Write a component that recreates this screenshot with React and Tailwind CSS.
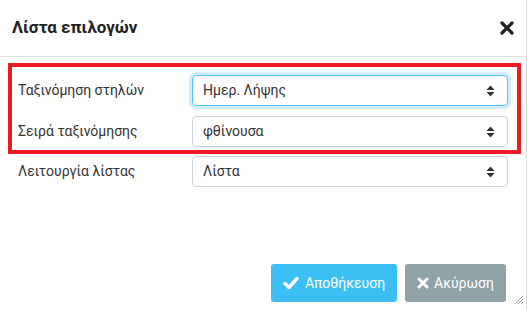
import React from "react";

const Caret = () => (
  <svg width="9" height="12" viewBox="0 0 9 12" className="shrink-0">
    <path d="M4.5 0.5 L8.5 5 H0.5 Z" fill="#333" />
    <path d="M0.5 7 H8.5 L4.5 11.5 Z" fill="#333" />
  </svg>
);

const Select = ({ value, focused }) => (
  <div
    className={
      "w-[316px] h-[31px] flex items-center justify-between pl-[10px] pr-[12px] rounded-[4px] bg-white text-[14px] text-[#333] " +
      (focused
        ? "border border-[#4fc3f7] shadow-[0_0_0_3px_#d3ecfb]"
        : "border border-[#ced4da]")
    }
  >
    <span>{value}</span>
    <Caret />
  </div>
);

const Row = ({ label, value, focused }) => (
  <div className="flex items-center">
    <div className="w-[174px] text-[14px] text-[#333]">{label}</div>
    <Select value={value} focused={focused} />
  </div>
);

const App = () => {
  return (
    <main
      className="w-[529px] h-[310px] bg-white overflow-hidden"
      style={{ fontFamily: "Roboto, 'Noto Sans', sans-serif" }}
    >
      <div className="w-[527px] h-[310px] border-r border-[#dcdcdc] flex flex-col">
        {/* header */}
        <div className="h-[57px] shrink-0 flex items-center justify-between pl-[12px] pr-[12px] border-b border-[#e0e0e0]">
          <h1 className="text-[17px] font-bold text-[#222] pb-[1px]">Λίστα επιλογών</h1>
          <svg width="14" height="14" viewBox="0 0 14 14">
            <path d="M2 2 L12 12 M12 2 L2 12" stroke="#222" strokeWidth="3.2" strokeLinecap="round" />
          </svg>
        </div>

        {/* body */}
        <div className="flex-1 px-[8px] pt-[6px]">
          <div className="w-[513px] border-4 border-[#ed1c24] pl-[6px] pt-[8px] pb-[3px] flex flex-col gap-[10px]">
            <Row label="Ταξινόμηση στηλών" value="Ημερ. Λήψης" focused />
            <Row label="Σειρά ταξινόμησης" value="φθίνουσα" />
          </div>
          <div className="pl-[10px] pt-[2px]">
            <Row label="Λειτουργία λίστας" value="Λίστα" />
          </div>
        </div>

        {/* footer */}
        <div className="relative flex justify-end gap-[8px] pr-[20px] pb-[8px]">
          <button className="w-[126px] h-[38px] rounded-[3px] bg-[#3bbff2] text-white text-[14px] flex items-center justify-center gap-[6px]">
            <svg width="16" height="14" viewBox="0 0 16 14">
              <path d="M2 7.5 L6 11.5 L14 2.5" stroke="#fff" strokeWidth="3.4" fill="none" strokeLinecap="round" strokeLinejoin="round" />
            </svg>
            Αποθήκευση
          </button>
          <button className="w-[101px] h-[38px] rounded-[3px] bg-[#8fa2a8] text-white text-[14px] flex items-center justify-center gap-[5px]">
            <svg width="12" height="12" viewBox="0 0 12 12">
              <path d="M2 2 L10 10 M10 2 L2 10" stroke="#fff" strokeWidth="3" strokeLinecap="round" />
            </svg>
            Ακύρωση
          </button>
          <svg width="10" height="10" viewBox="0 0 10 10" className="absolute right-[2px] bottom-[5px]">
            <path d="M9 1 L1 9 M9 4 L4 9 M9 7 L7 9" stroke="#999" strokeWidth="1" />
          </svg>
        </div>
      </div>
    </main>
  );
};

export default App;
